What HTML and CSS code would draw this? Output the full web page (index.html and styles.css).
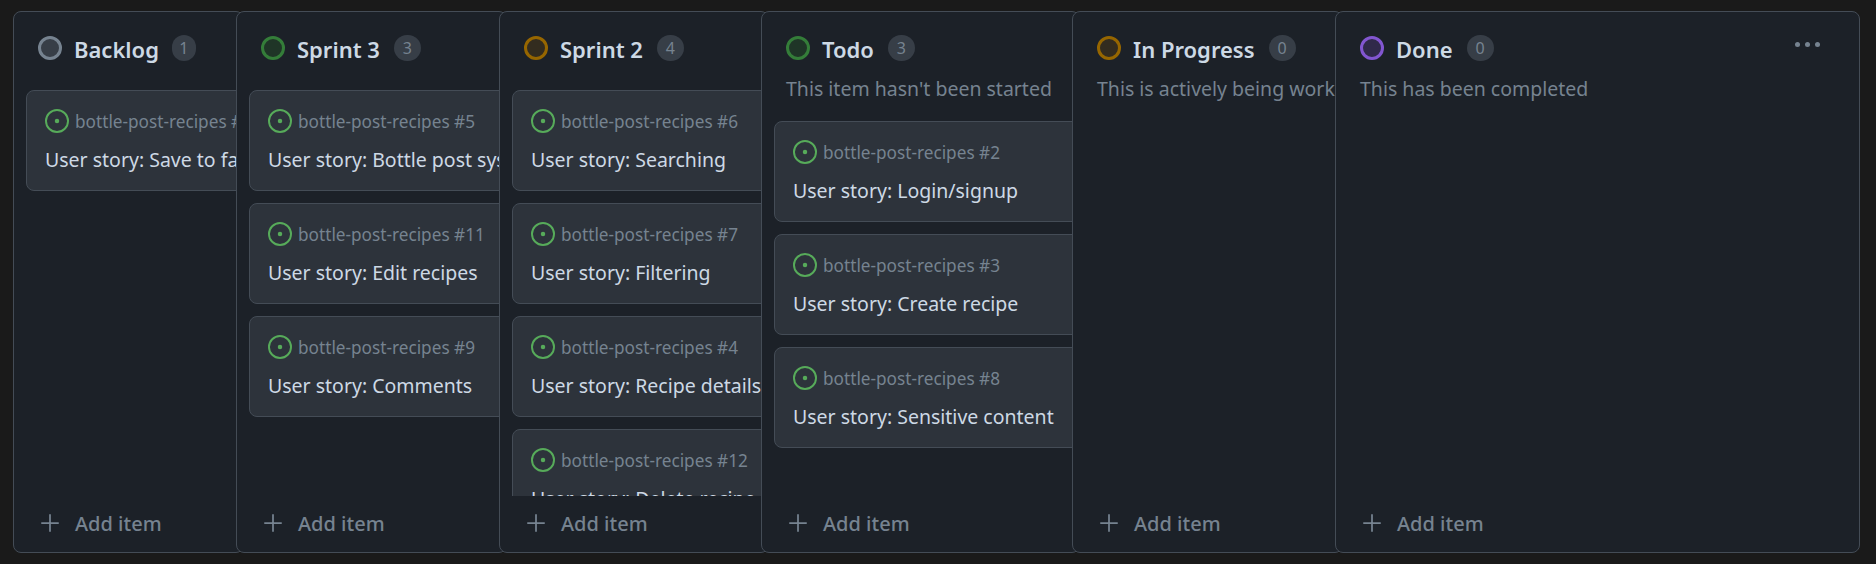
FILE: index.html
```html
<!DOCTYPE html>
<html lang="en">
  <head>
    <meta charset="UTF-8" />
    <title>bottle-post-recipes board</title>
    <link rel="stylesheet" href="styles.css">
  </head>
  <body>
    <svg class="defs" width="0" height="0">
      <symbol id="issue" viewBox="0 0 16 16">
        <path fill="currentColor" d="M8 9.500a1.500 1.500 0 1 0 0-3 1.500 1.500 0 0 0 0 3Z" />
        <path fill="currentColor" d="M8 0a8 8 0 1 1 0 16A8 8 0 0 1 8 0ZM1.300 8a6.700 6.700 0 1 0 13.400 0A6.700 6.700 0 0 0 1.300 8Z" />
      </symbol>
      <symbol id="plus" viewBox="0 0 16 16">
        <path fill="currentColor" d="M7.300 1h1.400v6.300H15v1.400H8.700V15H7.300V8.700H1V7.300h6.300Z" />
      </symbol>
    </svg>
    <main class="board">
      <section class="col col-backlog">
        <header class="col-head">
          <span class="dot dot-gray"></span><h2>Backlog</h2><span class="count count-one">1</span>
        </header>
        <div class="cards">
          <article class="card">
            <div class="card-repo"><svg class="issue"><use href="#issue" /></svg><span>bottle-post-recipes #10</span></div>
            <p>User story: Save to favorites</p>
          </article>
        </div>
        <button class="add"><svg class="plus"><use href="#plus" /></svg>Add item</button>
      </section>

      <section class="col col-sprint3">
        <header class="col-head">
          <span class="dot dot-green"></span><h2>Sprint 3</h2><span class="count">3</span>
        </header>
        <div class="cards">
          <article class="card">
            <div class="card-repo"><svg class="issue"><use href="#issue" /></svg><span>bottle-post-recipes #5</span></div>
            <p>User story: Bottle post system</p>
          </article>
          <article class="card">
            <div class="card-repo"><svg class="issue"><use href="#issue" /></svg><span>bottle-post-recipes #11</span></div>
            <p>User story: Edit recipes</p>
          </article>
          <article class="card">
            <div class="card-repo"><svg class="issue"><use href="#issue" /></svg><span>bottle-post-recipes #9</span></div>
            <p>User story: Comments</p>
          </article>
        </div>
        <button class="add"><svg class="plus"><use href="#plus" /></svg>Add item</button>
      </section>

      <section class="col col-sprint2">
        <header class="col-head">
          <span class="dot dot-orange"></span><h2>Sprint 2</h2><span class="count">4</span>
        </header>
        <div class="cards">
          <article class="card">
            <div class="card-repo"><svg class="issue"><use href="#issue" /></svg><span>bottle-post-recipes #6</span></div>
            <p>User story: Searching</p>
          </article>
          <article class="card">
            <div class="card-repo"><svg class="issue"><use href="#issue" /></svg><span>bottle-post-recipes #7</span></div>
            <p>User story: Filtering</p>
          </article>
          <article class="card">
            <div class="card-repo"><svg class="issue"><use href="#issue" /></svg><span>bottle-post-recipes #4</span></div>
            <p>User story: Recipe details</p>
          </article>
          <article class="card">
            <div class="card-repo"><svg class="issue"><use href="#issue" /></svg><span>bottle-post-recipes #12</span></div>
            <p>User story: Delete recipe</p>
          </article>
        </div>
        <button class="add"><svg class="plus"><use href="#plus" /></svg>Add item</button>
      </section>

      <section class="col col-todo">
        <header class="col-head">
          <span class="dot dot-green"></span><h2>Todo</h2><span class="count">3</span>
        </header>
        <p class="col-desc">This item hasn't been started</p>
        <div class="cards">
          <article class="card">
            <div class="card-repo"><svg class="issue"><use href="#issue" /></svg><span>bottle-post-recipes #2</span></div>
            <p>User story: Login/signup</p>
          </article>
          <article class="card">
            <div class="card-repo"><svg class="issue"><use href="#issue" /></svg><span>bottle-post-recipes #3</span></div>
            <p>User story: Create recipe</p>
          </article>
          <article class="card">
            <div class="card-repo"><svg class="issue"><use href="#issue" /></svg><span>bottle-post-recipes #8</span></div>
            <p>User story: Sensitive content</p>
          </article>
        </div>
        <button class="add"><svg class="plus"><use href="#plus" /></svg>Add item</button>
      </section>

      <section class="col col-progress">
        <header class="col-head">
          <span class="dot dot-orange"></span><h2>In Progress</h2><span class="count">0</span>
        </header>
        <p class="col-desc">This is actively being worked on</p>
        <div class="cards"></div>
        <button class="add"><svg class="plus"><use href="#plus" /></svg>Add item</button>
      </section>

      <section class="col col-done">
        <header class="col-head">
          <span class="dot dot-purple"></span><h2>Done</h2><span class="count">0</span>
          <span class="more"><i></i><i></i><i></i></span>
        </header>
        <p class="col-desc">This has been completed</p>
        <div class="cards"></div>
        <button class="add"><svg class="plus"><use href="#plus" /></svg>Add item</button>
      </section>
    </main>
  </body>
</html>
```

FILE: styles.css
```css
* {
  box-sizing: border-box;
}
html,
body {
  height: 100%;
}
body {
  margin: 0;
  background-color: #1a1a1a;
  font-family: "Noto Sans", Arial, sans-serif;
  overflow: hidden;
}
.defs {
  display: block;
}
.board {
  display: flex;
  height: 542px;
  margin: 11px 16px 0 13px;
}
.col {
  display: flex;
  flex-direction: column;
  flex: none;
  margin-right: -8px;
  overflow: hidden;
  background-color: #1c2128;
  border: 1px solid #444c56;
  border-radius: 8px;
}
.col-backlog {
  width: 231px;
}
.col-sprint3 {
  width: 271px;
}
.col-sprint2 {
  width: 270px;
}
.col-todo {
  width: 319px;
}
.col-progress {
  width: 271px;
}
.col-done {
  width: 525px;
  margin-right: 0;
}
.col-head {
  display: flex;
  align-items: center;
  flex: none;
  height: 26px;
  margin: 23px 0 0 24px;
}
.col-head h2 {
  margin: 2px 14px 0 12px;
  font-size: 22px;
  font-weight: 600;
  line-height: 26px;
  color: #cdd9e5;
  white-space: nowrap;
}
.dot {
  flex: none;
  width: 24px;
  height: 24px;
  border: 3px solid;
  border-radius: 50%;
}
.dot-gray {
  border-color: #768390;
  background-color: #373e47;
}
.dot-green {
  border-color: #347d39;
  background-color: #1f3527;
}
.dot-orange {
  border-color: #966600;
  background-color: #332c1f;
}
.dot-purple {
  border-color: #8256d0;
  background-color: #30294a;
}
.count {
  flex: none;
  width: 27px;
  height: 26px;
  border-radius: 13px;
  background-color: #373e47;
  color: #768390;
  font-size: 16px;
  line-height: 26px;
  text-align: center;
}
.count-one {
  width: 24px;
  margin-left: -1px;
}
.more {
  display: flex;
  gap: 5px;
  margin: 0 0 8px auto;
  padding-right: 39px;
}
.more i {
  width: 5px;
  height: 5px;
  border-radius: 50%;
  background-color: #768390;
}
.col-desc {
  flex: none;
  margin: 15px 0 0 24px;
  font-size: 19.500px;
  line-height: 26px;
  color: #768390;
  white-space: nowrap;
}
.cards {
  flex: 1;
  min-height: 0;
  overflow: hidden;
  margin-top: 29px;
  padding-left: 12px;
}
.col-desc + .cards {
  margin-top: 19px;
}
.card {
  width: 420px;
  height: 101px;
  margin-bottom: 12px;
  padding: 18px 18px 0;
  background-color: #2d333b;
  border: 1px solid #444c56;
  border-radius: 8px;
}
.card-repo {
  display: flex;
  align-items: center;
  height: 24px;
  color: #768390;
  font-size: 17.200px;
}
.card-repo span {
  margin-left: 6px;
}
.issue {
  flex: none;
  width: 24px;
  height: 24px;
  color: #57ab5a;
}
.card p {
  margin: 14px 0 0;
  font-size: 19.500px;
  line-height: 26px;
  color: #cdd9e5;
  white-space: nowrap;
}
.add {
  display: flex;
  align-items: center;
  flex: none;
  height: 56px;
  padding: 0 0 2px 26px;
  border: none;
  background: none;
  color: #768390;
  font-family: inherit;
  font-size: 20px;
  font-weight: 500;
  text-align: left;
}
.plus {
  width: 20px;
  height: 20px;
  margin-right: 15px;
}
```
